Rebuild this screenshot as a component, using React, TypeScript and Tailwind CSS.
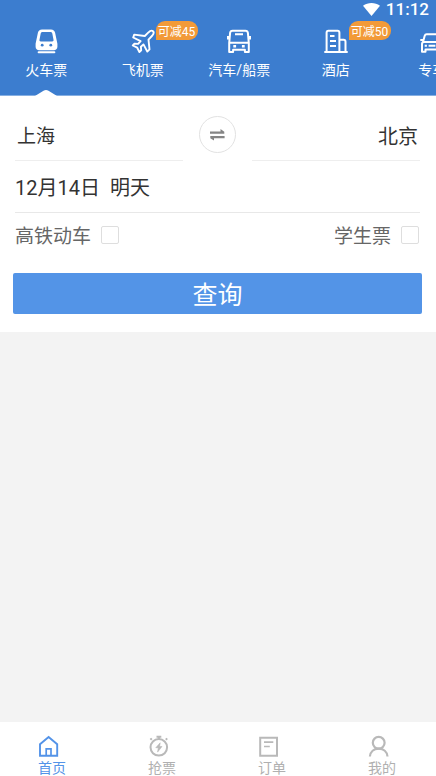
import type { ReactNode } from "react";

function TrainIcon() {
  return (
    <svg width="24" height="26" viewBox="0 0 24 26" fill="none">
      <path fillRule="evenodd" fill="#fff" d="M8 .5h9c2.3 0 3.7 1.3 4.1 3.3l2.3 10.9v3.1c0 2-1.5 3.4-3.6 3.4H5.2c-2.1 0-3.6-1.4-3.6-3.4v-3.1L3.9 3.8C4.3 1.8 5.7.5 8 .5ZM8.5 3c-1 0-1.6.6-1.8 1.5l-1.2 6.2c-.2 1 .3 1.7 1.3 1.7h11.4c1 0 1.5-.7 1.3-1.7l-1.2-6.2C18.1 3.6 17.5 3 16.5 3h-8Z" />
      <circle cx="8.2" cy="16.2" r="1.4" fill="#3c7dcf" />
      <circle cx="16.8" cy="16.2" r="1.4" fill="#3c7dcf" />
      <path d="M4.6 23.3h15.8" stroke="#fff" strokeWidth="1.9" strokeLinecap="round" />
    </svg>
  );
}

function PlaneIcon() {
  return (
    <svg width="24" height="26" viewBox="0 0 24 26" fill="none" stroke="#fff" strokeWidth="1.9" strokeLinejoin="round">
      <path d="M17.2 3.6c1.6-1.6 3.8-2.3 4.8-1.4 1 1.1.4 3.3-1.1 4.8l-3.4 3.6 1 9.8-2.2 2.2-3.8-7.2-2.6 2.4.3 3.5-1.8 1.7-2.2-4.3-4.4-2.2 1.7-1.8 3.6.2 2.5-2.8-7.4-3.6 1-2.9 10.6 1.4 3.4-3.4Z" />
    </svg>
  );
}

function BusIcon() {
  return (
    <svg width="24" height="26" viewBox="0 0 24 26" fill="none" stroke="#fff" strokeWidth="2" strokeLinejoin="round">
      <path d="M5.5 1.8h13c1.4 0 2.2.8 2.4 2.1l.9 10v9h-3.9v-2.2H6.1v2.2H2.2v-9l.9-10c.2-1.3 1-2.1 2.4-2.1ZM2.6 13.8h18.8" />
      <path d="M8 5.3h8M1 7v3.5M23 7v3.5" strokeWidth="2" />
      <path d="M6.3 17.2h2.8M14.9 17.2h2.8" strokeWidth="2.6" />
    </svg>
  );
}

function HotelIcon() {
  return (
    <svg width="24" height="26" viewBox="0 0 24 26" fill="none" stroke="#fff" strokeWidth="2" strokeLinejoin="round">
      <path d="M.3 23h23.4M2.6 23V3.7c0-1.3.6-1.9 1.8-1.9h9.2c1.2 0 1.8.6 1.8 1.9V23M15.4 10.8h4.2c1.3 0 1.9.6 1.9 1.9V23" />
      <path d="M6 7h4.5M6 12h6M6 17h6" strokeWidth="1.8" />
    </svg>
  );
}

function CarIcon() {
  return (
    <svg width="24" height="26" viewBox="0 0 24 26" fill="none" stroke="#fff" strokeWidth="2" strokeLinejoin="round">
      <path d="M3 13 4.7 6.8c.3-1 .9-1.5 1.9-1.5h10.8c1 0 1.6.5 1.9 1.5L21 13M2 22.8v-7.7c0-1.3.8-2.1 2.1-2.1h15.8c1.3 0 2.1.8 2.1 2.1v7.7h-3.5v-2.4h-13v2.4H2ZM.3 11h2.6M21.1 11h2.6" />
      <path d="M4.7 16.8h2.2M8.6 16.8h6.8M17.1 16.8h2.2" strokeWidth="2" />
    </svg>
  );
}

function HomeIcon() {
  return (
    <svg className="shrink-0" width="21" height="22" viewBox="0 0 21 22" fill="none" stroke="#5393e8" strokeWidth="1.9">
      <path d="M2 20.7V9.3l8.6-7.2 8.6 7.2v11.4H2Z" />
      <path d="M8.2 20.5v-6.6H13v6.6" strokeWidth="1.7" />
    </svg>
  );
}

function TimerIcon() {
  return (
    <svg className="shrink-0" width="21" height="22" viewBox="0 0 21 22" fill="none" stroke="#b9b9b9" strokeWidth="2">
      <circle cx="10.8" cy="12.3" r="8.3" />
      <path d="M8.5 1.7h4.8M10.9 1.5v2.5M3.8 3.4 2.4 4.8M17.8 3.4l1.4 1.4" />
      <path d="m12.2 7.8-4.4 4.9h2.5l-.7 4.4 4.4-5.6h-2.4l.6-3.7Z" fill="#b9b9b9" stroke="#b9b9b9" strokeWidth=".6" />
    </svg>
  );
}

function OrderIcon() {
  return (
    <svg className="shrink-0" width="21" height="22" viewBox="0 0 21 22" fill="none" stroke="#b9b9b9" strokeWidth="2">
      <path d="M2.2 2.8H19v18H2.2Z" />
      <path d="M6 7.2h9.3M6 11.5h5.8" strokeWidth="1.7" />
    </svg>
  );
}

function UserIcon() {
  return (
    <svg className="shrink-0" width="21" height="22" viewBox="0 0 21 22" fill="none" stroke="#b9b9b9" strokeWidth="2.2">
      <circle cx="10.7" cy="7.8" r="5.9" />
      <path d="M1.9 21.5c.5-4.8 3.9-7.8 8.8-7.8s8.3 3 8.8 7.8" />
    </svg>
  );
}

interface Tab {
  label: string;
  icon: ReactNode;
  badge?: string;
}

const tabs: Tab[] = [
  { label: "火车票", icon: <TrainIcon /> },
  { label: "飞机票", icon: <PlaneIcon />, badge: "可减45" },
  { label: "汽车/船票", icon: <BusIcon /> },
  { label: "酒店", icon: <HotelIcon />, badge: "可减50" },
  { label: "专车", icon: <CarIcon /> },
];

const navItems = [
  { label: "首页", icon: <HomeIcon />, active: true },
  { label: "抢票", icon: <TimerIcon />, active: false },
  { label: "订单", icon: <OrderIcon />, active: false },
  { label: "我的", icon: <UserIcon />, active: false },
];

function Option({ label }: { label: string }) {
  return (
    <div className="flex items-center gap-[10px]">
      <span className="pt-[3px] text-[19px] leading-[24px] text-[#666]">{label}</span>
      <span className="size-[18px] rounded-[2px] border border-[#dedede] bg-white" />
    </div>
  );
}

export default function App() {
  return (
    <div className="flex h-[776px] w-[436px] flex-col overflow-hidden bg-[#f3f3f3] font-['Roboto','Noto_Sans_CJK_SC',sans-serif]">
      <header className="relative h-[96px] shrink-0 overflow-hidden bg-[#3c7dcf] text-white shadow-[inset_0_-1px_0_#86afe2]">
        <div className="flex h-[18px] items-center justify-end gap-[6px] pr-[7px]">
          <svg width="17" height="13" viewBox="0 0 17 13">
            <path d="M0 2.8C5-.9 12-.9 17 2.8L8.5 13Z" fill="#fff" />
          </svg>
          <span className="text-[17px] leading-[18px] font-medium">11:12</span>
        </div>
        <nav className="ml-[-2px] flex w-[483px] pt-[11px]">
          {tabs.map((tab) => (
            <div key={tab.label} className="relative flex w-[96.5px] shrink-0 flex-col items-center">
              {tab.icon}
              <span className="mt-[5px] text-[14px] leading-[20px] whitespace-nowrap">{tab.label}</span>
              {tab.badge && (
                <span className="absolute top-[-8px] left-[61px] flex h-[19px] w-[42px] items-center justify-center rounded-[9px] rounded-bl-none bg-[#f29a38] pt-[3px] text-[12px] leading-[16px] whitespace-nowrap">
                  {tab.badge}
                </span>
              )}
            </div>
          ))}
        </nav>
        <svg className="absolute top-[89px] left-[35px]" width="22" height="7" viewBox="0 0 22 7">
          <path d="M0 7 8.5 1.8Q11 0 13.5 1.8L22 7Z" fill="#fff" />
        </svg>
      </header>

      <main className="flex h-[236px] shrink-0 flex-col bg-white">
        <div className="flex h-[65px] pl-[15px] text-[#333]">
          <div className="flex w-[168px] items-center border-b border-[#eee] pt-[18px] pl-[2px] text-[19px]">
            <span className="leading-[24px]">上海</span>
          </div>
          <button className="mt-[20px] ml-[16px] flex size-[37px] items-center justify-center rounded-full border border-[#e2e2e2]" aria-label="swap">
            <svg width="15" height="14" viewBox="0 0 15 14" fill="#858585">
              <path d="M0 3.6h10.5V1l3.8 2.7v2.1H0ZM14.6 10.2H4v2.4L.3 10.2V8h14.3Z" />
            </svg>
          </button>
          <div className="ml-[16px] flex w-[168px] items-center justify-end border-b border-[#eee] pt-[18px] pr-[2px] text-[20px]">
            <span className="leading-[24px]">北京</span>
          </div>
        </div>
        <div className="mr-[16px] ml-[15px] flex h-[52px] items-center gap-[10px] border-b border-[#e8e8e8] pt-[3px] text-[20px] text-[#333]">
          <span>12月14日</span>
          <span>明天</span>
        </div>
        <div className="flex h-[45px] items-center justify-between pr-[17px] pb-[1px] pl-[15px]">
          <Option label="高铁动车" />
          <Option label="学生票" />
        </div>
        <button className="mr-[14px] ml-[13px] mt-[15px] flex h-[41px] items-center justify-center rounded-[2px] bg-[#5394e7] pt-[5px] text-[25px] leading-[36px] text-white">
          查询
        </button>
      </main>

      <footer className="mt-auto flex h-[54px] shrink-0 bg-white pl-[38px]">
        {navItems.map((item) => (
          <div key={item.label} className="flex w-[110px] shrink-0 flex-col items-start pt-[13px]">
            {item.icon}
            <span className={item.active ? "mt-[3px] text-[14px] leading-[16px] text-[#5393e8]" : "mt-[3px] text-[14px] leading-[16px] text-[#b0b0b0]"}>
              {item.label}
            </span>
          </div>
        ))}
      </footer>
    </div>
  );
}
